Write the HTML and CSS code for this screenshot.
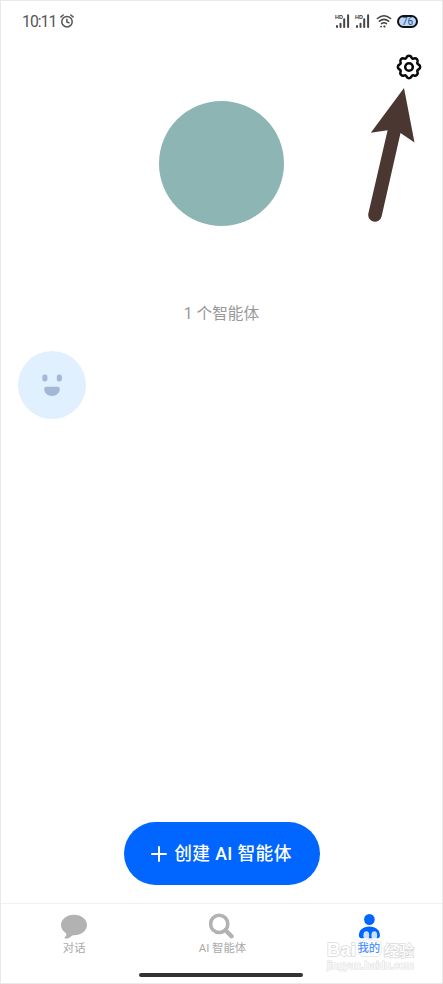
FILE: index.html
```
<!DOCTYPE html>
<html lang="zh-CN">
<head>
  <meta charset="UTF-8">
  <meta name="viewport" content="width=device-width, initial-scale=1.0">
  <title>我的</title>
  <link rel="stylesheet" href="styles.css">
</head>
<body>

<div class="phone">
  <header class="status">
    <div class="status-left">
      <span class="time">10:11</span>
      <svg class="alarm" width="14" height="14" viewBox="0 0 14 14" fill="none" stroke="#555" stroke-width="1.5" stroke-linecap="round">
        <circle cx="7" cy="7.7" r="5.2"/>
        <path d="M6.9 5.2V8l2 .7M1 2.9 3.2 1M13 2.9 10.8 1"/>
      </svg>
    </div>
    <div class="status-right">
      <svg class="signal" width="15" height="14" viewBox="0 0 15 14">
        <text x="0" y="4.6">HD</text>
        <path d="M2 11.9v1M5.5 9.8v3.1M9.2 5.2v7.7M13.1 1.2v11.7"/>
      </svg>
      <svg class="signal" width="15" height="14" viewBox="0 0 15 14">
        <text x="0" y="4.6">HD</text>
        <path d="M2 11.9v1M5.5 9.8v3.1M9.2 5.2v7.7M13.1 1.2v11.7"/>
      </svg>
      <svg class="wifi" width="16" height="14" viewBox="0 0 16 14" fill="none" stroke="#444" stroke-width="1.6" stroke-linecap="round">
        <path d="M1.4 4.5q6.6-5.5 13.2 0M3.4 7.2q4.6-3.6 9.2 0M5.6 9.6q2.4-1.7 4.8 0"/>
        <path d="M5 12.6h.1M8.2 12.5h.5" stroke-width="1.8"/>
      </svg>
      <span class="battery">76</span>
    </div>
  </header>

  <div class="toolbar">
    <svg class="gear" width="26" height="26" viewBox="-12.7 -12.7 25.4 25.4" fill="none" stroke="#0a0a0a" stroke-width="2.5" stroke-linejoin="round">
      <path d="M9.27-2.48A2.7 2.7 0 0 1 9.27 2.48A1.6 1.6 0 0 0 8.31 4.8A2.7 2.7 0 0 1 4.8 8.31A1.6 1.6 0 0 0 2.48 9.27A2.7 2.7 0 0 1-2.48 9.27A1.6 1.6 0 0 0-4.8 8.31A2.7 2.7 0 0 1-8.31 4.8A1.6 1.6 0 0 0-9.27 2.48A2.7 2.7 0 0 1-9.27-2.48A1.6 1.6 0 0 0-8.31-4.8A2.7 2.7 0 0 1-4.8-8.31A1.6 1.6 0 0 0-2.48-9.27A2.7 2.7 0 0 1 2.48-9.27A1.6 1.6 0 0 0 4.8-8.31A2.7 2.7 0 0 1 8.31-4.8A1.6 1.6 0 0 0 9.27-2.48Z"/>
      <circle r="3.7"/>
    </svg>
  </div>

  <main class="profile">
    <div class="avatar"></div>
    <p class="count">1 个智能体</p>
    <div class="agents">
      <svg width="68" height="68" viewBox="0 0 68 68">
        <circle cx="34" cy="34" r="34" fill="#e0f0ff"/>
        <rect x="24.4" y="23.4" width="5" height="7" rx="2.2" fill="#a4b7d6"/>
        <rect x="38.8" y="23.4" width="5" height="7" rx="2.2" fill="#a4b7d6"/>
        <path d="M28.2 35.8h11.6q2 0 2 1.9c0 4.4-3.4 7.2-7.8 7.2s-7.8-2.8-7.8-7.2q0-1.9 2-1.9Z" fill="#a4b7d6"/>
      </svg>
    </div>
  </main>

  <div class="create-row">
    <button class="create">
      <svg width="16" height="16" viewBox="0 0 16 16" fill="none" stroke="#fff" stroke-width="2" stroke-linecap="round">
        <path d="M8 1v14M1 8h14"/>
      </svg>
      <span>创建 AI 智能体</span>
    </button>
  </div>

  <nav class="tabs">
    <a class="tab">
      <svg width="28" height="26" viewBox="0 0 28 26">
        <path d="M14 1.8C21.2 1.8 27 6.4 27 12S21.2 22.2 14 22.2C12.5 22.2 11.6 22.8 10.4 23.9 8.6 25.4 6.5 25.9 5 25.4 4.3 25.1 4.3 24.5 5 24 6.2 23 6.6 21.9 6.3 20.5 3 18.6 1 15.5 1 12 1 6.4 6.8 1.8 14 1.8Z" fill="#b2b2b2"/>
      </svg>
      <span>对话</span>
    </a>
    <a class="tab">
      <svg width="26" height="26" viewBox="0 0 26 26" fill="none" stroke="#b2b2b2">
        <circle cx="10.2" cy="10.9" r="8.6" stroke-width="3.6"/>
        <path d="m16.5 17.2 6 6" stroke-width="4.4" stroke-linecap="round"/>
      </svg>
      <span>AI 智能体</span>
    </a>
    <a class="tab active">
      <svg width="26" height="26" viewBox="0 0 26 26" fill="#06f">
        <ellipse cx="13.4" cy="6.5" rx="5.3" ry="5.6"/>
        <path d="M13.4 13.5C19.9 13.5 23.9 17.3 23.9 22.2 23.9 24.6 22.7 25.3 20.4 25.3H6.4C4.1 25.3 2.9 24.6 2.9 22.2 2.9 17.3 6.9 13.5 13.4 13.5Z"/>
      </svg>
      <span>我的</span>
    </a>
  </nav>
  <div class="home-bar"></div>

  <!-- pointer to the settings button -->
  <svg class="pointer" width="48" height="136" viewBox="0 0 48 136">
    <path d="M36 0 46.5 54.5 32.5 45 13.6 128.5A6.7 6.7 0 0 1 .4 125.3L19.6 42.2 2.8 44.7Z" fill="#4a3731"/>
  </svg>

  <div class="watermark">
    <svg width="94" height="46" viewBox="0 0 94 46">
      <g class="paw">
        <ellipse cx="42.3" cy="8.5" rx="2.9" ry="4.2"/>
        <ellipse cx="50.3" cy="8.5" rx="2.9" ry="4.2"/>
        <path class="pad" d="M46 12.5c4 0 4.5 1.5 8 1.5 3.5.2 4.500 3 4 6-.5 3 0 10-6 9.500H40c-6 .5-6-6.500-5.500-9.500-.5-3 0-5.800 3.500-6 3.500 0 4-1.500 8-1.500Z"/>
      </g>
      <text class="wm-main" x="3" y="29" textLength="29">Bai</text>
      <text class="wm-cn" x="60" y="28.5" textLength="30">经验</text>
      <text class="wm-url" x="3" y="42" textLength="87">jingyan.baidu.com</text>
    </svg>
  </div>
</div>

</body>
</html>
```
FILE: styles.css
```
* {
  box-sizing: border-box;
}

body {
  margin: 0;
  background: #fff;
  font-family: Roboto, "Noto Sans CJK SC", sans-serif;
}

.phone {
  position: relative;
  display: flex;
  flex-direction: column;
  width: 443px;
  height: 984px;
  border: 1px solid #e9e9e9;
  overflow: hidden;
}

/* status bar */
.status {
  display: flex;
  justify-content: space-between;
  align-items: center;
  height: 40px;
  padding: 0 24px 0 21px;
}

.status-left,
.status-right {
  display: flex;
  align-items: center;
}

.status-left {
  gap: 4px;
}

.status-right {
  gap: 5.5px;
}

.time {
  font-size: 15.8px;
  line-height: 20px;
  letter-spacing: -1px;
  color: #555;
  padding-top: 1px;
}

.signal path {
  stroke: #444;
  stroke-width: 2;
  stroke-linecap: round;
}

.signal text {
  font: bold 5.5px "Liberation Sans", sans-serif;
  fill: #333;
}

.battery {
  width: 21px;
  height: 13px;
  border: 2px solid #111;
  border-radius: 7px;
  background: #b9d8fb;
  color: #33557d;
  font: 10px/9px Roboto, sans-serif;
  text-align: center;
}

.toolbar {
  display: flex;
  justify-content: flex-end;
  padding: 13px 20px 0 0;
}

.gear {
  display: block;
}

/* profile */
.profile {
  flex: 1;
  display: flex;
  flex-direction: column;
  align-items: center;
  padding-top: 21px;
}

.avatar {
  width: 125px;
  height: 125px;
  border-radius: 50%;
  background: #8cb5b4;
}

.count {
  margin: 76px 0 25px;
  font-size: 15.7px;
  line-height: 24px;
  color: #999;
}

.agents {
  align-self: stretch;
  padding-left: 17px;
}

/* create button */
.create-row {
  display: flex;
  justify-content: center;
  padding-bottom: 18px;
}

.create {
  display: flex;
  align-items: center;
  justify-content: center;
  gap: 7px;
  width: 196px;
  height: 63px;
  padding: 0 6px;
  border: none;
  border-radius: 32px;
  background: #06f;
  color: #fff;
  font-family: inherit;
  font-size: 17.7px;
  font-weight: 500;
  line-height: 22px;
  letter-spacing: 0.4px;
}

/* bottom tabs */
.tabs {
  display: flex;
  height: 70px;
  padding-top: 9px;
  border-top: 1px solid #f1f1f1;
}

.tab {
  flex: 1;
  display: flex;
  flex-direction: column;
  align-items: center;
  gap: 1px;
  font-size: 11.4px;
  line-height: 16px;
  color: #aaa;
}

.tab:first-child {
  padding-right: 2px;
}

.tab svg {
  display: block;
}

.active {
  color: #06f;
  font-weight: 500;
}

.home-bar {
  width: 164px;
  height: 4px;
  margin: 0 auto 6px 138px;
  border-radius: 2px;
  background: #333;
}

.pointer {
  position: absolute;
  left: 367px;
  top: 87px;
}

/* watermark over the last tab */
.watermark {
  position: absolute;
  left: 323px;
  top: 926px;
}

.watermark text {
  fill: #fff;
  stroke: #dcdcdc;
  stroke-width: 1.6px;
  paint-order: stroke;
}

.paw {
  fill: rgba(255, 255, 255, 0.8);
}

.pad {
  fill: rgba(255, 255, 255, 0.3);
  stroke: rgba(222, 222, 222, 0.7);
  stroke-width: 1px;
}

.wm-main {
  font: bold 18.5px "Liberation Sans", sans-serif;
}

.wm-cn {
  font: 500 15px "Noto Sans CJK SC", sans-serif;
}

.watermark .wm-url {
  font: 10.5px "Liberation Sans", sans-serif;
  stroke: #e2e2e2;
  stroke-width: 1.2px;
}
```
